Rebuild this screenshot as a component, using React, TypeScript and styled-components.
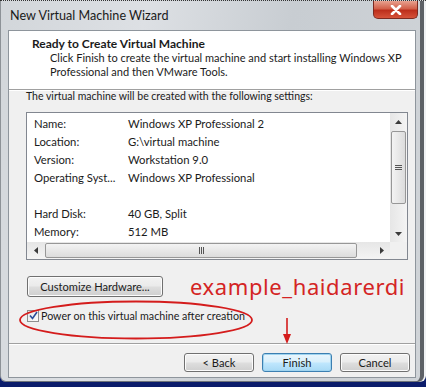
import styled, { createGlobalStyle } from "styled-components";

const GlobalStyle = createGlobalStyle`
  html, body {
    margin: 0;
    padding: 0;
  }
  body {
    width: 426px;
    height: 387px;
    overflow: hidden;
    background: #0b1c6b;
    font-family: Lato, "Noto Sans", sans-serif;
    color: #1b1b1b;
  }
`;

type Setting = { label: string; value: string };

const settings: (Setting | null)[] = [
  { label: "Name:", value: "Windows XP Professional 2" },
  { label: "Location:", value: "G:\\virtual machine" },
  { label: "Version:", value: "Workstation 9.0" },
  { label: "Operating Syst...", value: "Windows XP Professional" },
  null,
  { label: "Hard Disk:", value: "40 GB, Split" },
  { label: "Memory:", value: "512 MB" },
];

function App() {
  return (
    <>
      <GlobalStyle />
      <Window>
        <TitleBar>
          <Title>New Virtual Machine Wizard</Title>
          <CloseButton>
            <svg width="12" height="10" viewBox="0 0 12 10">
              <path d="M2 1 L10 9 M10 1 L2 9" stroke="#fff" strokeWidth="2.6" strokeLinecap="round" />
            </svg>
          </CloseButton>
        </TitleBar>
        <Client>
          <Header>
            <HeaderTitle>Ready to Create Virtual Machine</HeaderTitle>
            <HeaderText>
              Click Finish to create the virtual machine and start installing Windows XP
              <br />
              Professional and then VMware Tools.
            </HeaderText>
          </Header>
          <Divider />
          <Body>
            <Intro>The virtual machine will be created with the following settings:</Intro>
            <ListBox>
              <Rows>
                {settings.map((s, i) =>
                  s ? (
                    <Row key={i}>
                      <span>{s.label}</span>
                      <span>{s.value}</span>
                    </Row>
                  ) : (
                    <Row key={i} />
                  )
                )}
              </Rows>
              <VScroll>
                <ArrowCell>
                  <svg width="7" height="4" viewBox="0 0 7 4"><path d="M0 4 L3.5 0 L7 4 Z" fill="#3b3b3b" /></svg>
                </ArrowCell>
                <Track>
                  <VThumb>
                    <Grip $vertical />
                  </VThumb>
                </Track>
                <ArrowCell>
                  <svg width="7" height="4" viewBox="0 0 7 4"><path d="M0 0 L3.5 4 L7 0 Z" fill="#3b3b3b" /></svg>
                </ArrowCell>
              </VScroll>
              <HScroll>
                <ArrowCell>
                  <svg width="4" height="7" viewBox="0 0 4 7"><path d="M4 0 L0 3.5 L4 7 Z" fill="#3b3b3b" /></svg>
                </ArrowCell>
                <HTrack>
                  <HThumb>
                    <Grip />
                  </HThumb>
                </HTrack>
                <ArrowCell>
                  <svg width="4" height="7" viewBox="0 0 4 7"><path d="M0 0 L4 3.5 L0 7 Z" fill="#3b3b3b" /></svg>
                </ArrowCell>
              </HScroll>
              <Corner />
            </ListBox>
            <HardwareRow>
              <Button $width={136} $height={21}>Customize Hardware...</Button>
              <Watermark>example_haidarerdi</Watermark>
            </HardwareRow>
            <CheckRow>
              <CheckBox>
                <svg width="9" height="9" viewBox="0 0 9 9">
                  <path d="M1 4.5 L3.5 7.5 L8 1" stroke="#2a4d9a" strokeWidth="1.6" fill="none" />
                </svg>
              </CheckBox>
              <CheckLabel>Power on this virtual machine after creation</CheckLabel>
            </CheckRow>
          </Body>
          <Footer>
            <Button $width={70} $height={19}>&lt; Back</Button>
            <Button $width={70} $height={19} $primary>Finish</Button>
            <Button $width={70} $height={19}>Cancel</Button>
          </Footer>
        </Client>
        <Annotations width="426" height="387" viewBox="0 0 426 387">
          <ellipse cx="136" cy="320" rx="116" ry="18.5" fill="none" stroke="#d41c1c" strokeWidth="1.8" />
          <path d="M287 318 L287 340" stroke="#d41c1c" strokeWidth="1.6" />
          <path d="M283 334 L287 344 L291 334 Z" fill="#d41c1c" />
        </Annotations>
      </Window>
    </>
  );
}

const Window = styled.div`
  position: relative;
  box-sizing: border-box;
  width: 426px;
  height: 382px;
  display: flex;
  flex-direction: column;
  padding: 0 10px 4px 8px;
  background: linear-gradient(100deg, #d2d6da 0%, #dde0e4 30%, #c8cdd2 60%, #d0d4d8 100%);
  border-top: 1px dotted #333;
  border-radius: 0 0 6px 6px;
  box-shadow: inset 1px 0 0 #8d9297, inset -2px 0 0 #f0f2f4, inset -6px 0 0 #5d6166,
    inset 0 -1px 0 #6e7378;
`;

const TitleBar = styled.div`
  height: 29px;
  display: flex;
  justify-content: space-between;
  align-items: flex-start;
`;

const Title = styled.span`
  margin: 7px 0 0 2px;
  font-size: 12.6px;
  color: #1a1a1a;
`;

const CloseButton = styled.div`
  box-sizing: border-box;
  width: 45px;
  height: 18px;
  margin-right: -2px;
  display: flex;
  align-items: center;
  justify-content: center;
  border: 1px solid #7c2b22;
  border-top: none;
  border-radius: 0 0 5px 5px;
  background: linear-gradient(#e8a290 0%, #d2604a 45%, #bc2f1c 55%, #d6533a 100%);
`;

const Client = styled.div`
  flex: 1;
  display: flex;
  flex-direction: column;
  background: #f0f0f0;
  border: 1px solid #8e959c;
`;

const Header = styled.div`
  height: 58px;
  box-sizing: border-box;
  background: #fff;
  padding: 6px 0 0 23px;
`;

const HeaderTitle = styled.div`
  font-size: 12px;
  font-weight: 700;
  line-height: 14px;
`;

const HeaderText = styled.div`
  font-size: 11px;
  line-height: 14px;
  padding-left: 18px;
`;

const Divider = styled.div`
  border-top: 1px solid #a0a0a0;
  border-bottom: 1px solid #fff;
`;

const Body = styled.div`
  display: flex;
  flex-direction: column;
  padding: 0 7px 0 17px;
`;

const Intro = styled.div`
  font-size: 10.5px;
  line-height: 12px;
  margin-top: -1px;
`;

const ListBox = styled.div`
  margin-top: 10px;
  height: 148px;
  box-sizing: border-box;
  border: 1px solid #828790;
  background: #fff;
  display: grid;
  grid-template-columns: 1fr 17px;
  grid-template-rows: 1fr 17px;
`;

const Rows = styled.div`
  padding: 1px 0 0 7px;
  overflow: hidden;
`;

const Row = styled.div`
  display: grid;
  grid-template-columns: 94px 1fr;
  height: 18px;
  align-items: center;
  font-size: 11.3px;
  white-space: nowrap;
`;

const VScroll = styled.div`
  display: flex;
  flex-direction: column;
  background: linear-gradient(90deg, #e6e6e6, #f4f4f4);
`;

const HScroll = styled.div`
  display: flex;
  background: linear-gradient(#e6e6e6, #f4f4f4);
`;

const ArrowCell = styled.div`
  flex: 0 0 17px;
  height: 17px;
  display: flex;
  align-items: center;
  justify-content: center;
`;

const Track = styled.div`
  flex: 1;
  padding-top: 1px;
`;

const HTrack = styled.div`
  flex: 1;
  padding-left: 1px;
  display: flex;
  align-items: center;
`;

const thumb = `
  box-sizing: border-box;
  border: 1px solid #979797;
  border-radius: 2px;
  display: flex;
  align-items: center;
  justify-content: center;
`;

const VThumb = styled.div`
  ${thumb}
  margin: 0 1px;
  height: 73px;
  background: linear-gradient(90deg, #f3f3f3, #dcdcdc);
`;

const HThumb = styled.div`
  ${thumb}
  width: 312px;
  height: 15px;
  background: linear-gradient(#f3f3f3, #dcdcdc);
`;

const Grip = styled.div<{ $vertical?: boolean }>`
  width: ${(p) => (p.$vertical ? "7px" : "5px")};
  height: ${(p) => (p.$vertical ? "5px" : "7px")};
  background: ${(p) =>
    p.$vertical
      ? "repeating-linear-gradient(#555 0 1px, transparent 1px 2px)"
      : "repeating-linear-gradient(90deg, #555 0 1px, transparent 1px 2px)"};
`;

const Corner = styled.div`
  background: #f0f0f0;
`;

const HardwareRow = styled.div`
  display: flex;
  align-items: center;
  margin-top: 15px;
  padding-left: 1px;
`;

const Button = styled.div<{ $width: number; $height: number; $primary?: boolean }>`
  box-sizing: border-box;
  width: ${(p) => p.$width}px;
  height: ${(p) => p.$height}px;
  display: flex;
  align-items: center;
  justify-content: center;
  font-size: 11.1px;
  border: 1px solid ${(p) => (p.$primary ? "#3c7fb1" : "#707070")};
  border-radius: 3px;
  background: ${(p) =>
    p.$primary
      ? "linear-gradient(#eaf6fd 0%, #d9f0fc 45%, #bee6fd 55%, #a7d9f5 100%)"
      : "linear-gradient(#f2f2f2 0%, #ebebeb 45%, #dddddd 55%, #cfcfcf 100%)"};
  box-shadow: inset 0 0 0 1px ${(p) => (p.$primary ? "#9fd4f0" : "#fcfcfc")};
`;

const Watermark = styled.span`
  margin-left: 27px;
  font-family: "Noto Sans", sans-serif;
  font-size: 22px;
  line-height: 22px;
  letter-spacing: 0.6px;
  color: #d42424;
`;

const CheckRow = styled.div`
  display: flex;
  align-items: center;
  margin-top: 12px;
  padding-left: 1px;
`;

const CheckBox = styled.div`
  box-sizing: border-box;
  width: 12px;
  height: 12px;
  border: 1px solid #8f8f8f;
  background: linear-gradient(135deg, #e8e8e8, #fbfbfb);
  display: flex;
  align-items: center;
  justify-content: center;
`;

const CheckLabel = styled.span`
  margin-left: 2px;
  font-size: 10.7px;
`;

const Footer = styled.div`
  margin-top: auto;
  height: 34px;
  box-sizing: border-box;
  border-top: 1px solid #a0a0a0;
  box-shadow: inset 0 1px 0 #fff;
  display: flex;
  justify-content: flex-end;
  align-items: flex-start;
  gap: 8px;
  padding: 9px 5px 0 0;
`;

const Annotations = styled.svg`
  position: absolute;
  left: 0;
  top: -1px;
  pointer-events: none;
`;

export default App;
